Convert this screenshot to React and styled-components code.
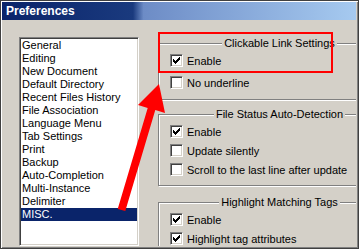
import React from "react";
import styled, { createGlobalStyle } from "styled-components";

const Global = createGlobalStyle`
  html, body { margin: 0; padding: 0; background: #d4d0c8; }
  * { box-sizing: border-box; }
`;

const Window = styled.div`
  position: relative;
  width: 359px;
  height: 249px;
  border: 1px solid #404040;
  box-shadow: inset 1px 1px 0 #ffffff, inset -1px -1px 0 #808080;
  padding: 1px 2px 2px 1px;
  background: #d4d0c8;
  display: flex;
  flex-direction: column;
  overflow: hidden;
  font-family: "Liberation Sans", Arial, sans-serif;
`;

const TitleBar = styled.div`
  height: 18px;
  flex-shrink: 0;
  display: flex;
  align-items: center;
  padding-left: 4px;
  background: linear-gradient(
    to right,
    #0a246a 0%,
    #1a3a7e 37%,
    #6d8cc6 40%,
    #a6caf0 100%
  );
  color: #ffffff;
  font-weight: bold;
  font-size: 12px;
`;

const Body = styled.div`
  flex: 1;
  min-height: 0;
  display: flex;
  gap: 19px;
  padding: 17px 0 0 17px;
  overflow: hidden;
`;

const List = styled.ul`
  list-style: none;
  margin: 0;
  width: 120px;
  flex-shrink: 0;
  padding: 1px;
  background: #ffffff;
  border-style: solid;
  border-width: 1px;
  border-color: #808080 #ffffff #ffffff #808080;
  box-shadow: inset 1px 1px 0 #404040, inset -1px -1px 0 #d4d0c8;
`;

const Item = styled.li`
  height: 13px;
  line-height: 13px;
  padding-left: 1px;
  font-size: 11px;
  white-space: nowrap;
  color: ${(p) => (p.$selected ? "#ffffff" : "#000000")};
  background: ${(p) => (p.$selected ? "#0a246a" : "transparent")};
`;

const Column = styled.div`
  width: 232px;
  flex-shrink: 0;
  display: flex;
  flex-direction: column;
`;

const Group = styled.fieldset`
  margin: ${(p) => p.$top}px 0 0 0;
  min-width: 0;
  padding: 1px 0 ${(p) => p.$bottom}px 11px;
  border: 1px solid #808080;
  box-shadow: inset 1px 1px 0 #ffffff, 1px 1px 0 #ffffff;
  display: flex;
  flex-direction: column;
  gap: ${(p) => p.$gap}px;
`;

const Legend = styled.legend`
  margin: 0 auto;
  padding: 0 2px;
  font-size: 11px;
  line-height: 13px;
  color: #000000;
  background: #d4d0c8;
  white-space: nowrap;
`;

const Row = styled.label`
  height: 19px;
  display: flex;
  align-items: center;
  gap: 4px;
  font-size: 11px;
  color: #000000;
  white-space: nowrap;
`;

const Box = styled.span`
  width: 13px;
  height: 13px;
  flex-shrink: 0;
  padding: 2px;
  background: #ffffff;
  border-style: solid;
  border-width: 1px;
  border-color: #808080 #ffffff #ffffff #808080;
  box-shadow: inset 1px 1px 0 #404040, inset -1px -1px 0 #d4d0c8;
  display: flex;
`;

const Overlay = styled.svg`
  position: absolute;
  left: -1px;
  top: -1px;
  width: 359px;
  height: 249px;
  pointer-events: none;
`;

const checkRows = [
  [6, 1],
  [5, 2],
  [0, 1],
  [4, 3],
  [0, 2],
  [3, 3],
  [0, 5],
  [1, 3],
  [2, 1],
];

function Check({ checked }) {
  return (
    <Box>
      {checked && (
        <svg width="7" height="7" viewBox="0 0 7 7" shapeRendering="crispEdges">
          <rect x="6" y="0" width="1" height="1" fill="#000" />
          <rect x="5" y="1" width="2" height="1" fill="#000" />
          <rect x="0" y="2" width="1" height="1" fill="#000" />
          <rect x="4" y="2" width="3" height="1" fill="#000" />
          <rect x="0" y="3" width="2" height="1" fill="#000" />
          <rect x="3" y="3" width="3" height="1" fill="#000" />
          <rect x="0" y="4" width="5" height="1" fill="#000" />
          <rect x="1" y="5" width="3" height="1" fill="#000" />
          <rect x="2" y="6" width="1" height="1" fill="#000" />
        </svg>
      )}
    </Box>
  );
}

function Option({ checked, children }) {
  return (
    <Row>
      <Check checked={checked} />
      <span>{children}</span>
    </Row>
  );
}

const items = [
  "General",
  "Editing",
  "New Document",
  "Default Directory",
  "Recent Files History",
  "File Association",
  "Language Menu",
  "Tab Settings",
  "Print",
  "Backup",
  "Auto-Completion",
  "Multi-Instance",
  "Delimiter",
  "MISC.",
];

export default function App() {
  return (
    <>
      <Global />
      <Window>
        <TitleBar>Preferences</TitleBar>
        <Body>
          <List>
            {items.map((it) => (
              <Item key={it} $selected={it === "MISC."}>
                {it}
              </Item>
            ))}
          </List>
          <Column>
            <Group $top={0} $bottom={7} $gap={3}>
              <Legend>Clickable Link Settings</Legend>
              <Option checked>Enable</Option>
              <Option>No underline</Option>
            </Group>
            <Group $top={8} $bottom={6} $gap={0}>
              <Legend>File Status Auto-Detection</Legend>
              <Option checked>Enable</Option>
              <Option>Update silently</Option>
              <Option>Scroll to the last line after update</Option>
            </Group>
            <Group $top={10} $bottom={6} $gap={0}>
              <Legend>Highlight Matching Tags</Legend>
              <Option checked>Enable</Option>
              <Option checked>Highlight tag attributes</Option>
            </Group>
          </Column>
        </Body>
        <Overlay viewBox="0 0 359 249">
          <rect
            x="159"
            y="33"
            width="173"
            height="39"
            fill="none"
            stroke="#ff0000"
            strokeWidth="2"
          />
          <polygon
            points="117.7,208.9 147.7,107.9 138,105 159,84 165,113 155.3,110.1 125.3,211.1"
            fill="#ff0000"
          />
        </Overlay>
      </Window>
    </>
  );
}
